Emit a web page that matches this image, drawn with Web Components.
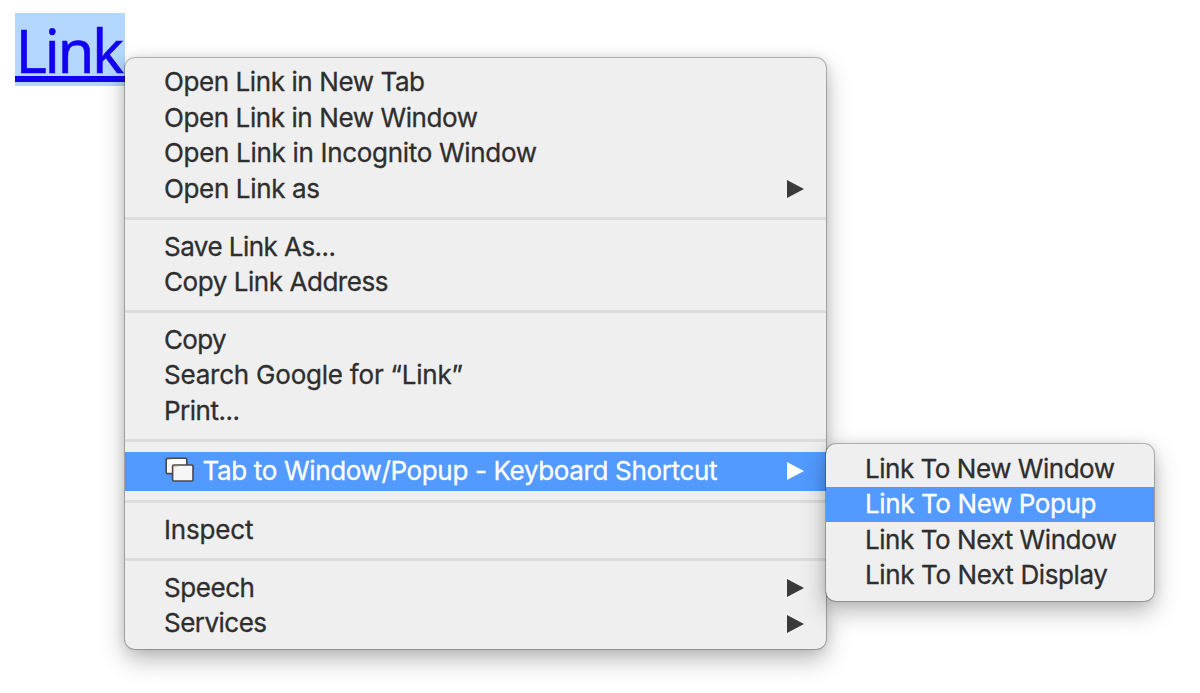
<!DOCTYPE html>
<html lang="en">
<head>
<meta charset="utf-8">
<title>Link</title>
<style>
body{margin:0;width:1200px;height:693px;overflow:hidden;background:#fff;font-family:Inter,"Liberation Sans",sans-serif}
</style>
</head>
<body>
<link-page></link-page>
<script>
const define = (name, html, init) => customElements.define(name, class extends HTMLElement {
  connectedCallback() {
    if (this.shadowRoot) return;
    const t = document.createElement('template');
    t.innerHTML = html;
    this.attachShadow({mode: 'open'}).append(t.content.cloneNode(true));
    if (init) init(this);
  }
});

// Spread a label over the given width through its letter spacing.
const fit = host => {
  const want = parseFloat(host.getAttribute('w'));
  const el = host.shadowRoot.querySelector('.label');
  const n = host.textContent.trim().length;
  if (want) el.style.letterSpacing = (want - el.getBoundingClientRect().width) / (n - 1) + 'px';
};

define('selected-link', `<style>
:host{display:block;width:110px;height:73px;background:#b3d7ff;color:#1400f0;font:60px/73px "Noto Sans","Open Sans",sans-serif}
a{display:block;height:73px;white-space:nowrap;position:relative}
.label{display:inline-block;position:relative;top:1px;left:-1px;padding-left:0;transform:translateX(1.5px);-webkit-text-stroke:.5px currentColor}
a::after{content:"";position:absolute;left:0;right:0;top:63.3px;height:5.7px;background:currentColor}
</style><a><span class="label"><slot></slot></span></a>`, fit);

define('menu-separator', `<style>
:host{display:flex;align-items:center;height:22.3px}
i{flex:1;height:3.4px;background:#dcdcdc}
</style><i></i>`);

define('windows-icon', `<style>:host{display:block;width:30px;height:27px;margin-right:8px;margin-top:-1px}svg{display:block}</style>
<svg width="30" height="27" viewBox="0 0 30 27">
<rect x="1.2" y="1.2" width="20.6" height="15.4" rx="1.2" fill="#fcfcfc" stroke="#484848" stroke-width="1.6"/>
<path d="M2 2.3h1.8" stroke="#e08a80"/><path d="M3.8 2.3h2" stroke="#b5c489"/>
<rect x="7.6" y="8" width="20.4" height="16" rx="1.2" fill="#f6f6f6" stroke="#484848" stroke-width="1.6"/>
<path d="M8.5 9.2h1.8" stroke="#e08a80"/><path d="M10.3 9.2h2" stroke="#b5c489"/>
</svg>`);

define('menu-item', `<style>
:host{display:flex;align-items:center;height:35.5px;padding:0 22.5px 0 39px;font-size:26px;line-height:35.5px;color:#2e2e2e;white-space:nowrap;box-sizing:border-box}
:host([active]){background:#529aff;color:#fff}
:host([tall]){height:39px;padding-left:39.5px}
.label{display:block;flex:none;margin-top:-1.6px;-webkit-text-stroke:.3px currentColor}
svg{display:none;margin-left:auto;color:#3a3a3a}
:host([active]) svg{color:#fff}
:host([more]) svg{display:block}
</style><slot name="icon"></slot><span class="label"><slot></slot></span>
<svg width="17" height="18" viewBox="0 0 17 18"><path d="M0 0L17 9L0 18Z" fill="currentColor"/></svg>`, fit);

define('context-menu', `<style>
:host{display:block;box-sizing:border-box;padding:7.2px 0 8px;background:#efefef;border-radius:10px;box-shadow:0 0 0 1px rgba(0,0,0,.24),0 10px 24px rgba(0,0,0,.29),0 0 12px rgba(0,0,0,.1)}
</style><slot></slot>`);

define('link-page', `<style>
:host{display:block;position:relative;padding:13px 0 0 15px}
.main,.sub{position:absolute}
.main{left:125px;top:58px;width:701px;height:591px}
.sub{left:826px;top:444.3px;width:328px;height:156.5px}
</style>
<selected-link w="108.5">Link</selected-link>
<context-menu class="main">
<menu-item w="261">Open Link in New Tab</menu-item>
<menu-item w="314">Open Link in New Window</menu-item>
<menu-item w="373">Open Link in Incognito Window</menu-item>
<menu-item w="156" more>Open Link as</menu-item>
<menu-separator></menu-separator>
<menu-item w="172">Save Link As...</menu-item>
<menu-item w="224.5">Copy Link Address</menu-item>
<menu-separator></menu-separator>
<menu-item w="62.5">Copy</menu-item>
<menu-item w="299">Search Google for “Link”</menu-item>
<menu-item w="76">Print...</menu-item>
<menu-separator></menu-separator>
<menu-item w="515" active tall more><windows-icon slot="icon"></windows-icon>Tab to Window/Popup - Keyboard Shortcut</menu-item>
<menu-separator></menu-separator>
<menu-item w="89.5">Inspect</menu-item>
<menu-separator></menu-separator>
<menu-item w="91" more>Speech</menu-item>
<menu-item w="103" more>Services</menu-item>
</context-menu>
<context-menu class="sub">
<menu-item w="250">Link To New Window</menu-item>
<menu-item w="231.5" active>Link To New Popup</menu-item>
<menu-item w="252">Link To Next Window</menu-item>
<menu-item w="243">Link To Next Display</menu-item>
</context-menu>`);
</script>
</body>
</html>
